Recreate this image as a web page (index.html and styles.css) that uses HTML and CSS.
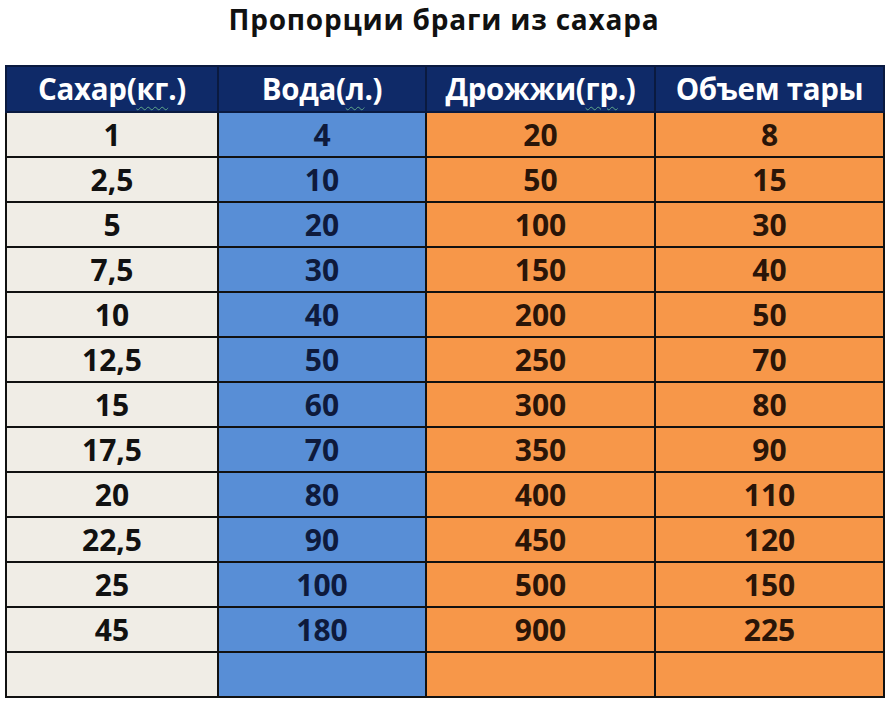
FILE: index.html
```html
<!DOCTYPE html>
<html lang="ru">
<head>
<meta charset="utf-8">
<title>Пропорции браги из сахара</title>
<link rel="stylesheet" href="styles.css">
</head>
<body>
<h1 class="title">Пропорции браги из сахара</h1>
<table class="grid">
  <colgroup>
    <col class="c1"><col class="c2"><col class="c3"><col class="c4">
  </colgroup>
  <thead>
    <tr>
      <th>Сахар(<span class="sq">кг</span>.)</th>
      <th>Вода(<span class="sq">л</span>.)</th>
      <th>Дрожжи(<span class="sq">гр</span>.)</th>
      <th>Объем тары</th>
    </tr>
  </thead>
  <tbody>
    <tr><td class="sugar">1</td><td class="water">4</td><td class="yeast">20</td><td class="vol">8</td></tr>
    <tr><td class="sugar">2,5</td><td class="water">10</td><td class="yeast">50</td><td class="vol">15</td></tr>
    <tr><td class="sugar">5</td><td class="water">20</td><td class="yeast">100</td><td class="vol">30</td></tr>
    <tr><td class="sugar">7,5</td><td class="water">30</td><td class="yeast">150</td><td class="vol">40</td></tr>
    <tr><td class="sugar">10</td><td class="water">40</td><td class="yeast">200</td><td class="vol">50</td></tr>
    <tr><td class="sugar">12,5</td><td class="water">50</td><td class="yeast">250</td><td class="vol">70</td></tr>
    <tr><td class="sugar">15</td><td class="water">60</td><td class="yeast">300</td><td class="vol">80</td></tr>
    <tr><td class="sugar">17,5</td><td class="water">70</td><td class="yeast">350</td><td class="vol">90</td></tr>
    <tr><td class="sugar">20</td><td class="water">80</td><td class="yeast">400</td><td class="vol">110</td></tr>
    <tr><td class="sugar">22,5</td><td class="water">90</td><td class="yeast">450</td><td class="vol">120</td></tr>
    <tr><td class="sugar">25</td><td class="water">100</td><td class="yeast">500</td><td class="vol">150</td></tr>
    <tr><td class="sugar">45</td><td class="water">180</td><td class="yeast">900</td><td class="vol">225</td></tr>
    <tr><td class="sugar"></td><td class="water"></td><td class="yeast"></td><td class="vol"></td></tr>
  </tbody>
</table>
</body>
</html>
```
FILE: styles.css
```css
html, body {
  margin: 0;
  padding: 0;
  background: #ffffff;
}
body {
  font-family: "Open Sans", "Liberation Sans", sans-serif;
  width: 888px;
  height: 701px;
  overflow: hidden;
}
.title {
  margin: 0;
  padding-top: 0;
  height: 65px;
  box-sizing: border-box;
  text-align: center;
  font-size: 28px;
  font-weight: 700;
  color: #111111;
  line-height: 38px;
  letter-spacing: 0.8px;
}
.grid {
  margin-left: 5px;
  width: 878px;
  border-collapse: collapse;
  table-layout: fixed;
}
.c1 { width: 212px; }
.c2 { width: 208px; }
.c3 { width: 229px; }
.c4 { width: 229px; }
.grid th {
  background: #0f2a68;
  color: #ffffff;
  height: 44px;
  padding: 0;
  font-size: 29.5px;
  font-weight: 700;
  border: 2px solid #0a1a40;
  letter-spacing: -0.3px;
  line-height: 44px;
}
.grid td {
  height: 43px;
  padding: 0;
  text-align: center;
  font-size: 30px;
  font-weight: 700;
  border: 2px solid #111111;
  line-height: 43px;
}
.sq {
  text-decoration: underline wavy #5fa88a 1px;
  text-underline-offset: 6px;
}
.sugar { background: #f0ede6; color: #111111; }
.water { background: #588ed6; color: #0e1a3c; }
.yeast { background: #f79749; color: #2a1508; }
.vol { background: #f79749; color: #2a1508; }
```
